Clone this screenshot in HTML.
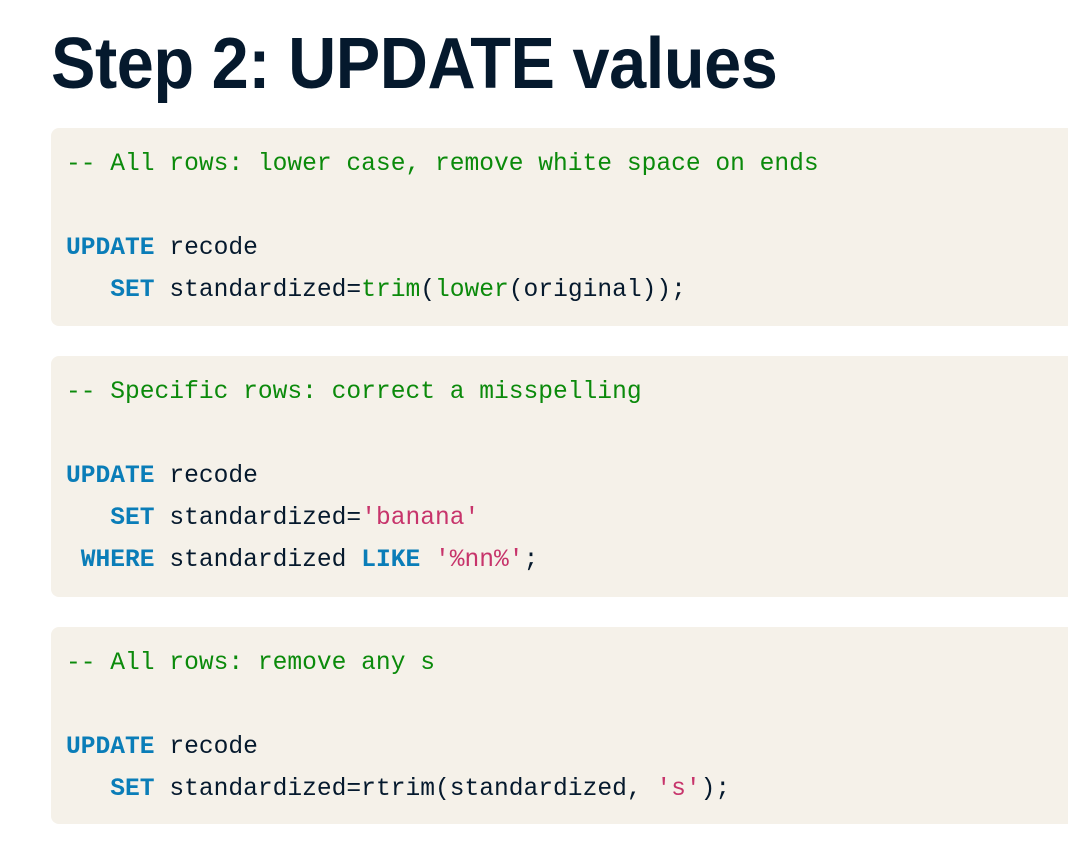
<!DOCTYPE html>
<html><head><meta charset="utf-8"><style>
html,body{margin:0;padding:0;background:#fff;width:1068px;height:841px;overflow:hidden}
h1{position:absolute;left:51px;top:14px;margin:0;font:bold 72px/100px "Liberation Sans",sans-serif;color:#05192d;letter-spacing:-0.5px;transform:scaleX(0.926);transform-origin:0 0;white-space:nowrap}
pre{position:absolute;left:51px;width:1040px;margin:0;background:#f5f1e9;border-radius:8px;box-sizing:border-box;padding:16px 15px 14px;font:24.6px/42px "Liberation Mono",monospace;color:#05192d}
.c{color:#0b8a0b}.k{color:#0a7db8;font-weight:bold}.s{color:#c7346b}
</style></head><body>
<h1>Step 2: UPDATE values</h1>
<pre style="top:128px;height:198px"><span class="c">-- All rows: lower case, remove white space on ends</span>

<span class="k">UPDATE</span> recode
   <span class="k">SET</span> standardized=<span class="c">trim</span>(<span class="c">lower</span>(original));</pre>
<pre style="top:356px;height:241px"><span class="c">-- Specific rows: correct a misspelling</span>

<span class="k">UPDATE</span> recode
   <span class="k">SET</span> standardized=<span class="s">'banana'</span>
 <span class="k">WHERE</span> standardized <span class="k">LIKE</span> <span class="s">'%nn%'</span>;</pre>
<pre style="top:627px;height:197px"><span class="c">-- All rows: remove any s</span>

<span class="k">UPDATE</span> recode
   <span class="k">SET</span> standardized=rtrim(standardized, <span class="s">'s'</span>);</pre>
</body></html>
